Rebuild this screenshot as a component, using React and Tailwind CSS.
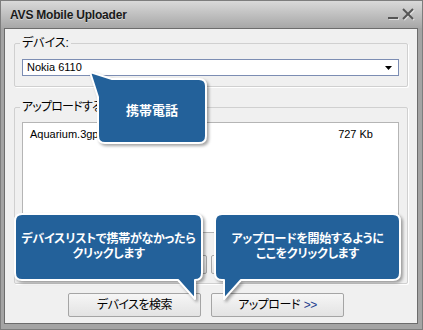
export default function App() {
  const jp = "font-['Liberation_Sans','Noto_Sans_CJK_JP',sans-serif] [font-feature-settings:'palt']";
  return (
    <div className={`relative w-[423px] h-[330px] overflow-hidden ${jp}`}>
      <div className="w-[423px] h-[330px] bg-[#a4a4a4] border border-[#7d7d7d] flex flex-col">
        <div className="h-[27px] shrink-0 bg-gradient-to-b from-[#d9d9d9] to-[#a7a7a7] flex items-center pl-[9px] pr-[7px]">
          <span className="text-[12px] leading-[14px] font-bold text-[#1a1a1a] tracking-[-0.2px] [text-shadow:0_1px_0_rgba(255,255,255,0.45)] font-['Liberation_Sans',sans-serif]">
            AVS Mobile Uploader
          </span>
          <svg className="ml-auto" width="27" height="13" viewBox="0 0 27 13">
            <g stroke="#ffffff" strokeOpacity="0.5" strokeWidth="2" transform="translate(1,1)">
              <line x1="0" y1="10" x2="10" y2="10" />
              <line x1="15" y1="1" x2="25" y2="11" />
              <line x1="25" y1="1" x2="15" y2="11" />
            </g>
            <g stroke="#555555" strokeWidth="2">
              <line x1="0" y1="10" x2="10" y2="10" />
              <line x1="15" y1="1" x2="25" y2="11" />
              <line x1="25" y1="1" x2="15" y2="11" />
            </g>
          </svg>
        </div>
        <div className="flex-1 pl-[3px] pr-[4px] pb-[5px]">
          <div className="h-full border border-[#6c6c6c] bg-[#f0f0f0] flex flex-col">
            <fieldset className="ml-[9px] mt-[7px] w-[394px] border border-[#d0d0d0] rounded-[2px] pl-[7px] pr-[8px] pt-[9px] pb-[10px] shadow-[1px_1px_0_#ffffff]">
              <legend className="-ml-[2px] px-[2px] text-[12px] leading-[14px] text-black">デバイス:</legend>
              <div className="h-[17px] w-full border border-[#7c8db3] bg-white flex items-center pl-[4px] pr-[6px]">
                <span className="text-[11px] leading-[13px] text-black font-['Liberation_Sans',sans-serif]">Nokia 6110</span>
                <svg className="ml-auto" width="7" height="4" viewBox="0 0 7 4">
                  <path d="M0 0 H7 L3.5 4 Z" fill="#000" />
                </svg>
              </div>
            </fieldset>
            <fieldset className="ml-[9px] mt-[13px] w-[394px] border border-[#d0d0d0] rounded-[2px] pl-[7px] pr-[8px] pt-[8px] pb-[9px] shadow-[1px_1px_0_#ffffff]">
              <legend className="-ml-[2px] px-[2px] text-[12px] leading-[14px] text-black tracking-[-0.8px]">アップロードするファイル:</legend>
              <div className="h-[111px] w-full border border-[#b5b5b5] bg-white pt-[4px] pl-[7px] pr-[25px]">
                <div className="flex text-[11px] leading-[14px] text-black font-['Liberation_Sans',sans-serif]">
                  <span>Aquarium.3gp</span>
                  <span className="ml-auto">727 Kb</span>
                </div>
              </div>
              <div className="mt-[22px] h-[19px] flex gap-[4px] pl-[108px]">
                <div className="w-[77px] h-[19px] border border-[#a8a8a8] rounded-[2px] bg-gradient-to-b from-[#f7f7f7] to-[#e2e2e2] flex items-center justify-center text-[12px]">追加</div>
                <div className="w-[79px] h-[19px] border border-[#a8a8a8] rounded-[2px] bg-gradient-to-b from-[#f7f7f7] to-[#e2e2e2] flex items-center justify-center text-[12px]">削除</div>
              </div>
            </fieldset>
            <div className="mt-[9px] ml-[63px] flex gap-[10px]">
              <div className="w-[133px] h-[24px] border border-[#a5a5a5] rounded-[2px] bg-gradient-to-b from-[#f6f6f6] to-[#e3e3e3] flex items-center justify-center text-[12px] leading-[14px] text-black tracking-[-0.5px]">
                デバイスを検索
              </div>
              <div className="w-[133px] h-[24px] border border-[#a5a5a5] rounded-[2px] bg-gradient-to-b from-[#f6f6f6] to-[#e3e3e3] flex items-center justify-center text-[12px] leading-[14px] text-black tracking-[-0.5px]">
                アップロード <span className="ml-[4px] text-[#1f3f8f] font-['Liberation_Sans',sans-serif]">&gt;&gt;</span>
              </div>
            </div>
          </div>
        </div>
      </div>

      <svg className="absolute left-0 top-0 pointer-events-none [filter:drop-shadow(2px_2px_1.5px_rgba(0,0,0,0.35))]" width="423" height="330" viewBox="0 0 423 330">
        <g fill="#23619a" stroke="#ffffff" strokeWidth="2" strokeLinejoin="round">
          <path d="M112 79 H199 Q206 79 206 86 V136 Q206 143 199 143 H105 Q98 143 98 136 V97 L90 72 Z" />
          <path d="M22 214 H195 Q202 214 202 221 V273 Q202 280 195 280 L195 299 L178 280 H22 Q15 280 15 273 V221 Q15 214 22 214 Z" />
          <path d="M222 214 H393 Q400 214 400 221 V273 Q400 280 393 280 H241 L224 299 V280 H222 Q215 280 215 273 V221 Q215 214 222 214 Z" />
        </g>
      </svg>

      <div className="absolute left-[98px] top-[79px] w-[108px] h-[64px] flex items-center justify-center text-white font-bold text-[13px] leading-[16px]">
        携帯電話
      </div>
      <div className="absolute left-[15px] top-[214px] w-[187px] h-[66px] flex flex-col items-center justify-center text-white font-bold text-[12px] leading-[15px] tracking-[-0.3px]">
        <span>デバイスリストで携帯がなかったら</span>
        <span>クリックします</span>
      </div>
      <div className="absolute left-[215px] top-[214px] w-[185px] h-[66px] flex flex-col items-center justify-center text-white font-bold text-[12px] leading-[15px] tracking-[-0.3px]">
        <span>アップロードを開始するように</span>
        <span>ここをクリックします</span>
      </div>
    </div>
  );
}
